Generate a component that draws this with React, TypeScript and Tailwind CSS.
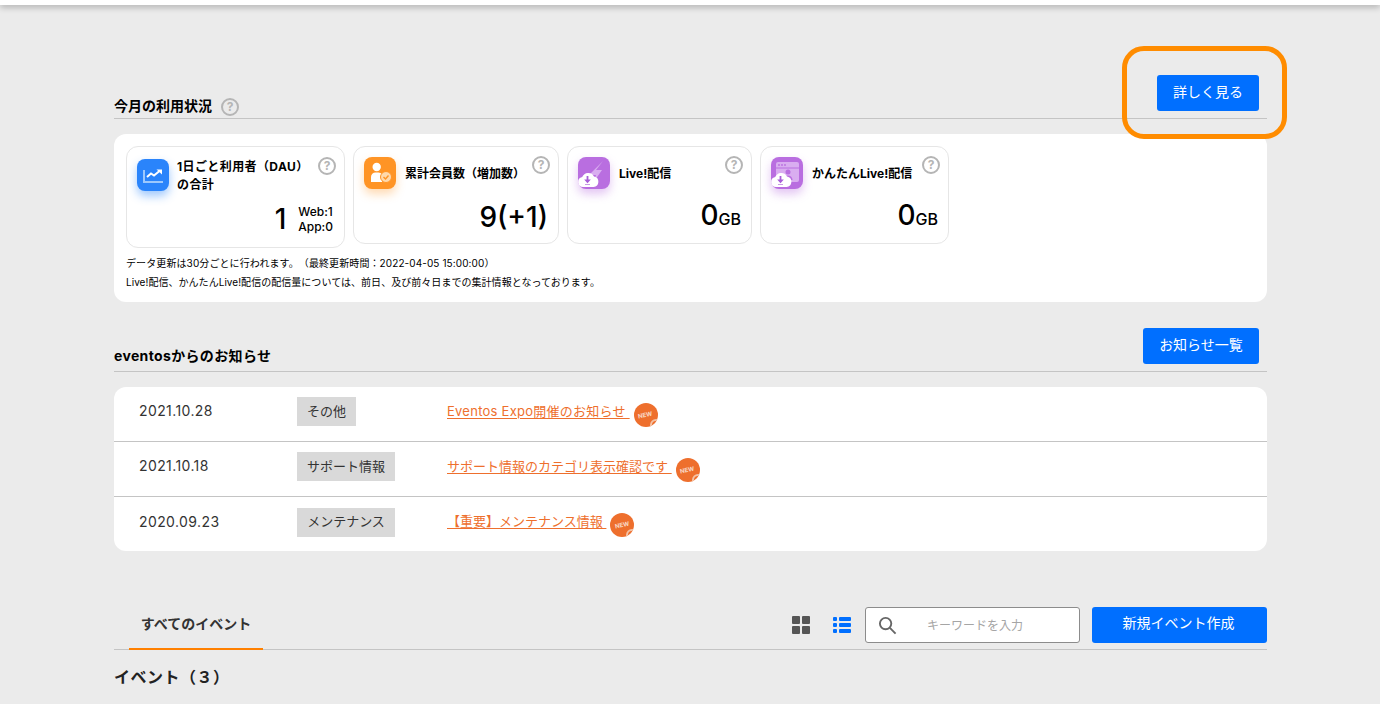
import type { ReactNode } from "react";

const FONT = "font-['Inter','Noto_Sans_CJK_JP',sans-serif] [text-spacing-trim:space-all]";

function Help({ className = "" }: { className?: string }) {
  return (
    <span className={`flex size-[18px] shrink-0 items-center justify-center rounded-full border-2 border-[#b5b5b5] text-[12px] font-bold leading-none text-[#b5b5b5] ${className}`}>
      ?
    </span>
  );
}

function Cloud() {
  return (
    <>
      <path d="M5 30a5 5 0 0 1-.8-9.900A6.500 6.500 0 0 1 16 19.500a5.300 5.300 0 0 1-.5 10.500z" fill="#fff" />
      <path d="M9.500 19v5" stroke="#a85ed8" strokeWidth="1.800" />
      <path d="M6.200 22.500h6.600l-3.300 3.700z" fill="#a85ed8" />
      <path d="M7 27.500h5" stroke="#c99be6" strokeWidth="1" />
    </>
  );
}

function IconTile({ color, glow, children }: { color: string; glow: string; children: ReactNode }) {
  return (
    <div className={`relative size-8 shrink-0 rounded-lg ${color} ${glow}`}>{children}</div>
  );
}

function DauIcon() {
  return (
    <IconTile color="bg-[#2a84fb]" glow="shadow-[0_5px_10px_rgba(42,132,251,0.45)]">
      <svg viewBox="0 0 32 32" className="size-8">
        <path d="M7 11v12h19" stroke="#9cc8fd" strokeWidth="2" fill="none" />
        <path d="M10 18l4-3.500 3 2 5.500-4.500" stroke="#fff" strokeWidth="2" fill="none" />
        <path d="M19.500 10.500h5.500v5z" fill="#fff" />
      </svg>
    </IconTile>
  );
}

function MemberIcon() {
  return (
    <IconTile color="bg-[#ff9425]" glow="shadow-[0_5px_10px_rgba(255,148,37,0.35)]">
      <svg viewBox="0 0 32 32" className="size-8">
        <circle cx="12.700" cy="10" r="4.200" fill="#fff" />
        <path d="M7 25v-5a4.500 4.500 0 0 1 4.500-4.500h3a5 5 0 0 1 3.500 1.500V25z" fill="#fff" />
        <circle cx="22" cy="20" r="5.500" fill="#ffd9ac" stroke="#ff9425" strokeWidth="1" />
        <path d="M19.500 20l2 2 3-3.500" stroke="#ff9425" strokeWidth="1.400" fill="none" />
      </svg>
    </IconTile>
  );
}

function LiveIcon() {
  return (
    <IconTile color="bg-[#b96ee0]" glow="shadow-[0_5px_10px_rgba(185,110,224,0.4)]">
      <svg viewBox="0 0 32 32" className="size-8 overflow-visible">
        <path d="M25 4 11 18h7l-3 8 9-13h-6z" fill="#d9adf0" />
        <Cloud />
      </svg>
    </IconTile>
  );
}

function EasyLiveIcon() {
  return (
    <IconTile color="bg-[#b96ee0]" glow="shadow-[0_5px_10px_rgba(185,110,224,0.4)]">
      <svg viewBox="0 0 32 32" className="size-8 overflow-visible">
        <rect x="5" y="5" width="23" height="20" rx="2" fill="#d9adf0" />
        <path d="M5 11h23" stroke="#b96ee0" strokeWidth="1" />
        <circle cx="8" cy="8" r="0.900" fill="#b96ee0" />
        <circle cx="11" cy="8" r="0.900" fill="#b96ee0" />
        <circle cx="14" cy="8" r="0.900" fill="#b96ee0" />
        <circle cx="17" cy="15" r="2.500" fill="#b96ee0" />
        <path d="M12.500 23a4.500 4.500 0 0 1 9 0z" fill="#b96ee0" />
        <Cloud />
      </svg>
    </IconTile>
  );
}

function NewBadge() {
  return (
    <span className="relative ml-[4px] mt-[6px] inline-flex size-6 shrink-0 items-center justify-center overflow-hidden rounded-full bg-[#ee6f2d]">
      <span className="rotate-[-12deg] text-[6px] font-bold leading-none text-[#f8d9c7]">NEW</span>
      <span className="absolute bottom-[-4px] right-[-4px] size-[12px] rounded-full border-2 border-[#f3c3a6]" />
    </span>
  );
}

const news = [
  { date: "2021.10.28", tag: "その他", tagWidth: "w-[59px]", title: "Eventos Expo開催のお知らせ ", track: "tracking-[0.25px]" },
  { date: "2021.10.18", tag: "サポート情報", tagWidth: "w-[98px]", title: "サポート情報のカテゴリ表示確認です ", track: "" },
  { date: "2020.09.23", tag: "メンテナンス", tagWidth: "w-[98px]", title: "【重要】メンテナンス情報 ", track: "" },
];

export default function App() {
  return (
    <div className={`relative h-[704px] overflow-hidden bg-[#ebebeb] ${FONT} text-black`}>
      <div className="h-[5px] bg-white shadow-[0_2px_6px_rgba(0,0,0,0.3)]" />

      <main className="mx-[113px] w-[1154px] pl-px">
        {/* 今月の利用状況 */}
        <section className="pt-[70px]">
          <div className="flex h-[44px] items-end justify-between border-b border-[#c4c4c4] pb-[2px]">
            <div className="flex items-center gap-[9px]">
              <h2 className="text-[14px] font-bold leading-[20px]">今月の利用状況</h2>
              <Help className="mt-[3px]" />
            </div>
            <button className="mb-[5px] mr-2 h-9 w-[102px] rounded-[3px] bg-[#006fff] pb-[3px] text-[14px] text-white">詳しく見る</button>
          </div>

          <div className="mt-[15px] h-[168px] rounded-xl bg-white px-3 pt-3">
            <div className="flex items-start gap-2">
              <div className="relative h-[102px] w-[219px] rounded-xl border border-[#e6e6e6] pl-[10px] pt-[12px]">
                <div className="flex gap-2">
                  <DauIcon />
                  <p className="-mt-px text-[12px] font-bold leading-[18px] tracking-[0.4px]">1日ごと利用者（DAU）<br />の合計</p>
                </div>
                <Help className="absolute right-[8px] top-[10px]" />
                <div className="absolute bottom-[13px] right-[11px] flex items-center gap-3">
                  <span className="text-[28px] font-medium leading-none">1</span>
                  <span className="text-[12px] font-medium leading-[15px]">Web:1<br />App:0</span>
                </div>
              </div>

              <div className="relative h-[98px] w-[206px] rounded-xl border border-[#e6e6e6] pl-[10px] pt-[10px]">
                <div className="flex items-center gap-[9px]">
                  <MemberIcon />
                  <p className="mt-[2px] text-[12px] font-bold leading-[18px]">累計会員数（増加数）</p>
                </div>
                <Help className="absolute right-[8px] top-[9px]" />
                <span className="absolute bottom-[12px] right-[10px] text-[28px] font-medium leading-none">9(+1)</span>
              </div>

              <div className="relative h-[98px] w-[185px] rounded-xl border border-[#e6e6e6] pl-[10px] pt-[10px]">
                <div className="flex items-center gap-[9px]">
                  <LiveIcon />
                  <p className="mt-[2px] text-[12px] font-bold leading-[18px]">Live!配信</p>
                </div>
                <Help className="absolute right-[8px] top-[9px]" />
                <span className="absolute bottom-[14px] right-[10px] text-[16px] font-medium leading-none"><span className="text-[28px]">0</span>GB</span>
              </div>

              <div className="relative h-[98px] w-[189px] rounded-xl border border-[#e6e6e6] pl-[10px] pt-[10px]">
                <div className="flex items-center gap-[9px]">
                  <EasyLiveIcon />
                  <p className="mt-[2px] text-[12px] font-bold leading-[18px]">かんたんLive!配信</p>
                </div>
                <Help className="absolute right-[8px] top-[9px]" />
                <span className="absolute bottom-[14px] right-[10px] text-[16px] font-medium leading-none"><span className="text-[28px]">0</span>GB</span>
              </div>
            </div>
            <p className="mt-[6px] text-[10px] leading-[19px]">
              <span className="tracking-[0.1px]">データ更新は30分ごとに行われます。（最終更新時間：2022-04-05 15:00:00）</span>
              <br />
              <span className="tracking-[0.04px]">Live!配信、かんたんLive!配信の配信量については、前日、及び前々日までの集計情報となっております。</span>
            </p>
          </div>
        </section>

        {/* お知らせ */}
        <section className="pt-[26px]">
          <div className="flex h-[44px] items-end justify-between border-b border-[#c4c4c4] pb-[5px]">
            <h2 className="text-[14px] font-bold leading-[20px] tracking-[0.35px]">eventosからのお知らせ</h2>
            <button className="mb-[2px] mr-2 h-9 w-[116px] rounded-[3px] bg-[#006fff] pb-[3px] text-[14px] text-white">お知らせ一覧</button>
          </div>

          <div className="mt-[15px] rounded-xl bg-white">
            {news.map((n, i) => (
              <div key={n.date} className={`flex items-center ${i < 2 ? "h-[55px] border-b border-[#c4c4c4] pb-[5px]" : "h-[54px] pb-[4px]"}`}>
                <span className="ml-[25px] mb-[2px] w-[158px] text-[14px] tracking-[0.4px] text-[#333]">{n.date}</span>
                <span className="w-[150px]">
                  <span className={`flex h-[29px] ${n.tagWidth} items-center justify-center bg-[#d9d9d9] text-[13px] text-[#333]`}>{n.tag}</span>
                </span>
                <span className="flex items-center">
                  <a className={`whitespace-pre text-[13px] text-[#ee6f2d] underline underline-offset-2 ${n.track}`}>{n.title}</a>
                  <NewBadge />
                </span>
              </div>
            ))}
          </div>
        </section>

        {/* イベント */}
        <section className="pt-[56px]">
          <div className="flex h-[43px] items-start justify-between border-b border-[#c4c4c4]">
            <div className="ml-[15px] flex h-[43px] w-[134px] items-start justify-center border-b-[2px] border-[#ff8000] pt-[7px]">
              <span className="text-[14px] font-bold leading-[20px] text-[#333]">すべてのイベント</span>
            </div>
            <div className="flex items-center">
              <svg viewBox="0 0 18 18" className="mr-[23px] size-[18px]" fill="#555">
                <rect width="8" height="8" rx="1" />
                <rect x="10" width="8" height="8" rx="1" />
                <rect y="10" width="8" height="8" rx="1" />
                <rect x="10" y="10" width="8" height="8" rx="1" />
              </svg>
              <svg viewBox="0 0 18 18" className="mr-[14px] size-[18px]" fill="#006fff">
                <rect y="1" width="4" height="4" rx="1" />
                <rect x="6" y="1" width="12" height="4" rx="1" />
                <rect y="7" width="4" height="4" rx="1" />
                <rect x="6" y="7" width="12" height="4" rx="1" />
                <rect y="13" width="4" height="4" rx="1" />
                <rect x="6" y="13" width="12" height="4" rx="1" />
              </svg>
              <div className="mr-3 flex h-9 w-[215px] items-center rounded-[3px] border border-[#8c8c8c] bg-white pl-[12px]">
                <svg viewBox="0 0 20 20" className="size-[19px]" fill="none" stroke="#666" strokeWidth="2">
                  <circle cx="8" cy="8" r="6" />
                  <path d="m12.500 12.500 6 6" />
                </svg>
                <span className="ml-[30px] mt-[2px] text-[12px] text-[#a5a5a5]">キーワードを入力</span>
              </div>
              <button className="h-9 w-[175px] rounded-[3px] bg-[#006fff] pb-[5px] pr-[2px] text-[14px] text-white">新規イベント作成</button>
            </div>
          </div>
          <h2 className="mt-[16px] text-[16px] font-bold leading-[22px] tracking-[0.5px] text-[#222]">イベント（３）</h2>
        </section>
      </main>

      {/* 注目枠 */}
      <div className="absolute left-[1122px] top-[46px] h-[93px] w-[165px] rounded-[22px] border-[5px] border-[#ff8c00]" />
    </div>
  );
}
